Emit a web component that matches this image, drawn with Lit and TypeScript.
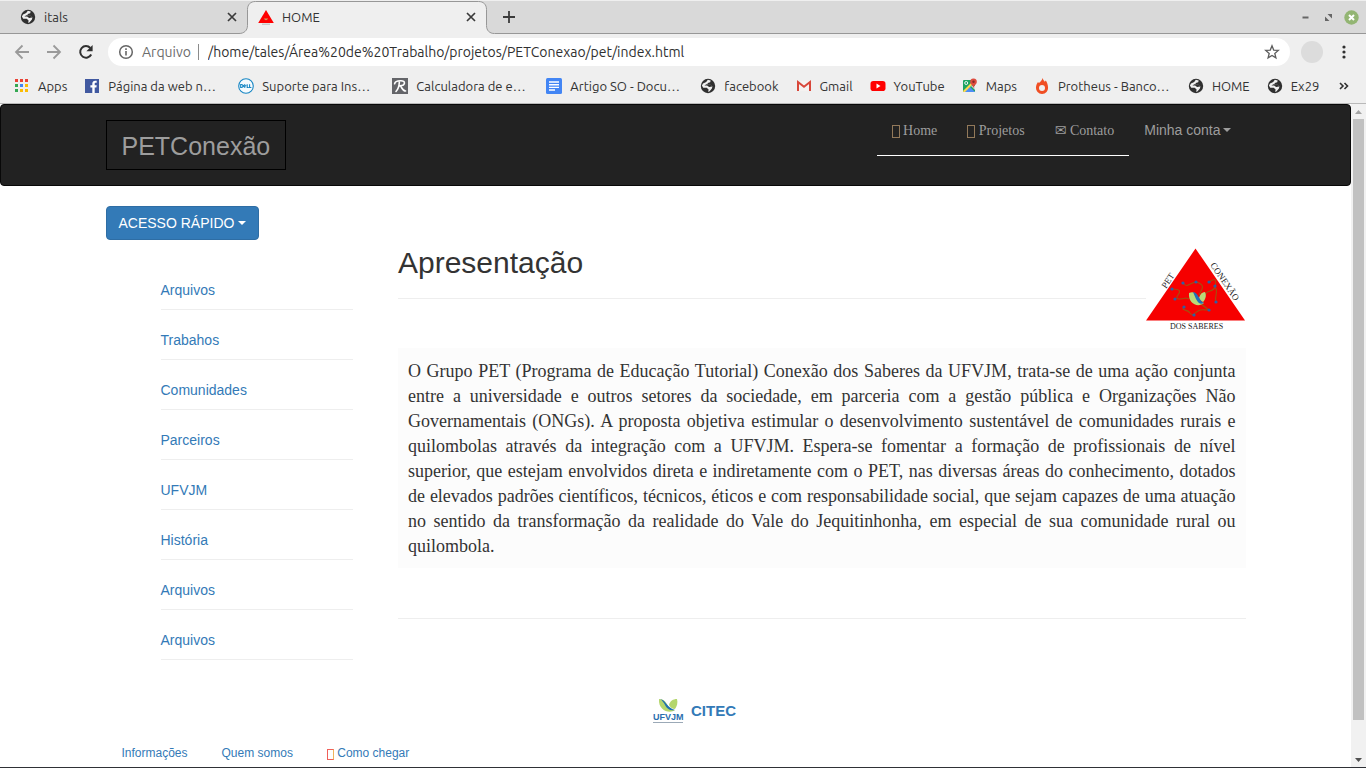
import { LitElement, html, css, svg } from "lit";
import { customElement } from "lit/decorators.js";

const globe = html`<svg class="ico" viewBox="0 0 16 16" aria-hidden="true">
  <circle cx="8" cy="8" r="7.2" fill="#303030" />
  <path d="M3 5.6 6.2 4l1.6-2.2 2.9.6-.5 1.8-2.4.8-.4 1.5 3.3.3 1.7 1.8-.5 2-2.3 2.6-1.4.8.4-2.6-1.9-1.6H3.2L1.9 7.6z" fill="#efefef" />
  <path d="M6.4 6.2 11 6.6l1.3 1.8-3.2.6-2-1.4H4.4z" fill="#303030" />
</svg>`;

const apps = html`<svg class="ico" viewBox="0 0 16 16" aria-hidden="true">
  ${["#e94235", "#e94235", "#e94235", "#34a853", "#4285f4", "#fbbc05", "#34a853", "#fbbc05", "#fbbc05"].map(
    (c, i) => svg`<rect x=${1 + (i % 3) * 5} y=${1 + Math.floor(i / 3) * 5} width="3" height="3" fill=${c} />`
  )}
</svg>`;

const facebook = html`<svg class="ico" viewBox="0 0 16 16" aria-hidden="true">
  <rect x="1" y="1" width="14" height="14" fill="#4159a0" />
  <path d="M8.3 15V9.4H6.4V7.2h1.9V5.7c0-2 1.1-3 2.9-3h1.5v2.1h-1c-.8 0-1 .4-1 1v1.4h2l-.3 2.2h-1.7V15z" fill="#fff" />
</svg>`;

const dell = html`<svg class="ico" viewBox="0 0 16 16" aria-hidden="true">
  <circle cx="8" cy="8" r="7.3" fill="#f6fbfe" stroke="#1686c4" stroke-width="1.1" />
  <path d="M2.7 6.5v3h.8c1.9 0 1.9-3 0-3zM5.2 8l2-1.5M5.2 8l2 1.6M6.2 8.9l2-1.5M9.2 6.3v3.2h1.6M11.6 6.3v3.2h1.8" fill="none" stroke="#1686c4" stroke-width="1.1" />
</svg>`;

const calc = html`<svg class="ico" viewBox="0 0 16 16" aria-hidden="true">
  <rect width="16" height="16" fill="#646569" />
  <path d="M2.6 5.8C3 3.5 6 2.6 9 2.7c4.8.1 4.7 4.7-1 5.2M7.4 3.5C7.2 8 6 11.5 4 13.5M8 8c1.6 0 2 5 5.6 5" fill="none" stroke="#fff" stroke-width="1.6" stroke-linecap="round" />
</svg>`;

const docs = html`<svg class="ico" viewBox="0 0 16 16" aria-hidden="true">
  <rect width="16" height="16" rx="1.5" fill="#4285f4" />
  <path d="M3 4h10M3 6.7h10M3 9.4h10M3 12h6" stroke="#fff" stroke-width="1.4" />
</svg>`;

const gmail = html`<svg class="ico" viewBox="0 0 16 16" aria-hidden="true">
  <path d="M2 3h12v10H2z" fill="#f4f2f1" />
  <path d="M2 13V4l6 4.700L14 4V13" fill="none" stroke="#d8473a" stroke-width="2" />
</svg>`;

const youtube = html`<svg class="ico" viewBox="0 0 16 16" aria-hidden="true">
  <rect x="0.5" y="3" width="15" height="10" rx="2.8" fill="#f00" />
  <path d="m6.5 5.600 4 2.400-4 2.400z" fill="#fff" />
</svg>`;

const maps = html`<svg class="ico" viewBox="0 0 16 16" aria-hidden="true">
  <rect x="1" y="2" width="12" height="12" rx="1" fill="#1da362" />
  <path d="m7.5 8.5 5.5 5.5H2z" fill="#4d8ef5" />
  <path d="m1 13 8-8 1.5 1.5L3 14H2q-1 0-1-1z" fill="#ffd94a" />
  <path d="m8.5 7.5 4.5 4.5V8z" fill="#d9d9d9" />
  <circle cx="4.2" cy="5" r="1.5" fill="none" stroke="#fff" stroke-width="0.9" />
  <path d="M11.5 0.500a3.300 3.300 0 0 1 3.300 3.500c0 2.400-2.500 2.800-3.300 6-.8-3.200-3.300-3.600-3.300-6a3.300 3.300 0 0 1 3.300-3.500z" fill="#dd4b3e" />
  <circle cx="11.5" cy="3.7" r="1.2" fill="#822b26" />
</svg>`;

const flame = html`<svg class="ico" viewBox="0 0 16 16" aria-hidden="true">
  <path d="M8.8 0c.3 2.200 1.300 2.800 2 3.800l1-1.200c1.300 2 2.200 4.300 2.200 6.600A6 6 0 0 1 8 16a6 6 0 0 1-6-6.500c0-2.200.9-3.900 2-5.500l.9 1C6.800 3.800 7.900 2.200 8.800 0z" fill="#f04e23" />
  <circle cx="8" cy="10" r="3" fill="#efefef" />
</svg>`;

const minas = html`<svg class="ico" viewBox="0 0 16 16" aria-hidden="true">
  <path d="M8 1 15.800 14H.2z" fill="#f00" />
  <path d="M5.800 9.500q2.200 3.500 4.400 0" fill="#cf9b62" />
  <path d="M4 15.200h8" stroke="#aaa" stroke-width="0.8" />
</svg>`;

const bookmarks = [
  { icon: apps, text: "Apps" },
  { icon: facebook, text: "Página da web n…", full: true },
  { icon: dell, text: "Suporte para Ins…", full: true },
  { icon: calc, text: "Calculadora de e…", full: true },
  { icon: docs, text: "Artigo SO - Docu…", full: true },
  { icon: globe, text: "facebook" },
  { icon: gmail, text: "Gmail" },
  { icon: youtube, text: "YouTube" },
  { icon: maps, text: "Maps" },
  { icon: flame, text: "Protheus - Banco…", full: true },
  { icon: globe, text: "HOME" },
  { icon: globe, text: "Ex29" },
];

const cross = html`<svg width="10" height="10" viewBox="0 0 10 10" aria-hidden="true">
  <path d="m1 1 8 8M9 1 1 9" stroke="#3a3a3a" stroke-width="1.7" />
</svg>`;

@customElement("browser-chrome")
export class BrowserChrome extends LitElement {
  static styles = css`
    :host {
      display: block;
      background: #efefef;
      border-bottom: 1px solid #b9b9b9;
      font: 13px/20px Ubuntu, "Noto Sans", sans-serif;
      color: #333;
    }
    button {
      display: grid;
      place-items: center;
      padding: 0;
      border: 0;
      background: none;
      color: inherit;
      font: inherit;
    }
    .ico {
      width: 16px;
      height: 16px;
      flex: none;
      display: block;
    }
    .strip {
      display: flex;
      align-items: center;
      height: 34px;
      box-sizing: border-box;
      background: #d9d9d9;
      border-top: 1px solid #efefef;
      border-bottom: 1px solid #979797;
    }
    .tab {
      position: relative;
      display: flex;
      align-items: center;
      gap: 8px;
      width: 240px;
      height: 32px;
      box-sizing: border-box;
      padding: 0 11px;
    }
    .tab.first {
      width: 247px;
      padding-left: 20px;
      padding-right: 10px;
    }
    .tab .title {
      flex: 1;
      position: relative;
    }
    .tab .ico,
    .tab button {
      position: relative;
    }
    .shape {
      position: absolute;
      left: -8px;
      top: 0;
    }
    .new {
      width: 44px;
      height: 32px;
    }
    .window {
      display: flex;
      align-items: center;
      gap: 8px;
      margin-left: auto;
      padding-right: 7px;
    }
    .window button {
      width: 15px;
      height: 15px;
    }
    .toolbar {
      display: flex;
      align-items: center;
      height: 36px;
      padding: 0 12px 0 6px;
    }
    .toolbar .nav {
      width: 32px;
      height: 28px;
    }
    .omni {
      display: flex;
      align-items: center;
      flex: 1;
      height: 28px;
      margin: 0 11px 0 6px;
      padding: 0 10px;
      border-radius: 14px;
      background: #fff;
      font-size: 14px;
    }
    .scheme {
      color: #6c6c6c;
      margin: 0 7px 0 8px;
      padding-right: 7px;
      border-right: 1px solid #8b8b8b;
      line-height: 16px;
    }
    .omni input {
      flex: 1;
      min-width: 0;
      border: 0;
      padding: 0 2px;
      background: none;
      font: inherit;
      color: #303030;
      outline: 0;
    }
    .avatar {
      width: 22px;
      height: 22px;
      border-radius: 50%;
      background: #dcdcdc;
      margin-right: 11px;
    }
    .marks {
      display: flex;
      align-items: center;
      gap: 17px;
      height: 31px;
      padding: 0 17px 2px 14px;
    }
    .mark {
      display: flex;
      align-items: center;
      gap: 8px;
      color: inherit;
      text-decoration: none;
      white-space: nowrap;
    }
    .mark.full {
      width: 137px;
    }
    .more {
      margin-left: auto;
    }
  `;

  render() {
    return html`
      <div class="strip">
        <div class="tab first">
          ${globe}<span class="title">itals</span>
          <button aria-label="Fechar itals">${cross}</button>
        </div>
        <div class="tab">
          <svg class="shape" width="256" height="33" viewBox="0 0 256 33" aria-hidden="true">
            <path d="M0 33v-.5C5 32.500 8.500 29.500 8.500 24.500V8.500C8.500 3.500 11.500.5 16.500.5h223c5 0 8 3 8 8v16c0 5 3 8 8 8h.5v.5z" fill="#efefef" />
            <path d="M0 32.500C5 32.500 8.500 29.500 8.500 24.500V8.500C8.500 3.500 11.500.5 16.500.5h223c5 0 8 3 8 8v16c0 5 3 8 8 8" fill="none" stroke="#979797" />
          </svg>
          ${minas}<span class="title">HOME</span>
          <button aria-label="Fechar HOME">${cross}</button>
        </div>
        <button class="new" aria-label="Nova guia">
          <svg width="12" height="12" viewBox="0 0 12 12"><path d="M6 0v12M0 6h12" stroke="#3a3a3a" stroke-width="1.8" /></svg>
        </button>
        <div class="window">
          <button aria-label="Minimizar">
            <svg width="15" height="15"><path d="M4.500 7.500h6" stroke="#666" stroke-width="2" /></svg>
          </button>
          <button aria-label="Restaurar">
            <svg width="15" height="15"><path d="M6.500 4H11v4.500zM4 6.500V11h4.500z" fill="#666" /></svg>
          </button>
          <button aria-label="Fechar janela">
            <svg width="15" height="15">
              <circle cx="7.5" cy="7.5" r="7.2" fill="#93b573" />
              <path d="m5 5 5 5M10 5l-5 5" stroke="#fff" stroke-width="2" />
            </svg>
          </button>
        </div>
      </div>
      <div class="toolbar">
        <button class="nav" aria-label="Voltar">
          <svg width="16" height="16" viewBox="0 0 16 16"><path d="M15 8H2M8.500 1.500 2 8l6.500 6.500" fill="none" stroke="#9a9a9a" stroke-width="1.8" /></svg>
        </button>
        <button class="nav" aria-label="Avançar">
          <svg width="16" height="16" viewBox="0 0 16 16"><path d="M1 8h13M7.500 1.500 14 8l-6.500 6.500" fill="none" stroke="#9a9a9a" stroke-width="1.8" /></svg>
        </button>
        <button class="nav" aria-label="Recarregar">
          <svg width="16" height="16" viewBox="0 0 16 16">
            <path d="M13.200 10.500A5.800 5.800 0 1 1 12.300 4" fill="none" stroke="#303030" stroke-width="2" />
            <path d="M14.600 1v6.200H8.400z" fill="#303030" />
          </svg>
        </button>
        <div class="omni">
          <svg class="ico" viewBox="0 0 16 16" aria-hidden="true">
            <circle cx="8" cy="8" r="6.3" fill="none" stroke="#666" stroke-width="1.5" />
            <path d="M8 7v4.500M8 4.300v1.600" stroke="#666" stroke-width="1.6" />
          </svg>
          <label class="scheme" for="url">Arquivo</label>
          <input id="url" value="/home/tales/Área%20de%20Trabalho/projetos/PETConexao/pet/index.html" />
          <svg class="ico" viewBox="0 0 16 16" aria-hidden="true">
            <path d="m8 1.800 1.700 4.300 4.600.3-3.500 3 1.100 4.500L8 11.400l-3.900 2.500 1.100-4.500-3.500-3 4.600-.3z" fill="none" stroke="#5c5c5c" stroke-width="1.3" />
          </svg>
        </div>
        <div class="avatar"></div>
        <button aria-label="Menu">
          <svg width="20" height="16"><g fill="#303030"><circle cx="10" cy="3" r="1.6" /><circle cx="10" cy="8" r="1.6" /><circle cx="10" cy="13" r="1.6" /></g></svg>
        </button>
      </div>
      <div class="marks">
        ${bookmarks.map((b) => html`<a class="mark ${b.full ? "full" : ""}" href="#">${b.icon}<span>${b.text}</span></a>`)}
        <button class="more" aria-label="Mais favoritos">
          <svg width="10" height="8" viewBox="0 0 10 8"><path d="m1 1 3 3-3 3M5.500 1l3 3-3 3" fill="none" stroke="#303030" stroke-width="1.6" /></svg>
        </button>
      </div>
    `;
  }
}

const petLogo = html`<svg class="pet" viewBox="0 2 100 100" role="img" aria-label="PET Conexão dos Saberes">
  <rect y="2" width="100" height="100" fill="#fff" />
  <path d="M49.500 10.500 99 82.500H0z" fill="#f60000" />
  <g fill="none" stroke="#a0520f" stroke-width="1.1">
    <path d="M37 45c4 6 8-1 13-1 8 2 8 5 3 13" />
    <path d="M26 51c8 0 9 2 6 6s0 5 8 3l3 1" />
    <path d="M63 44c6-4 8-3 6 5-2 6-8 2-10 8M69 49c4 4-1 9 1 15" />
    <path d="M38 69c-4 4 4 2 6 6 3 4 3 1 8-2 3-2 5-1 11-1l-8-6" />
  </g>
  <g fill="#2c5fa8">
    ${[[37, 45], [50, 44], [26, 51], [29, 61], [63, 44], [69, 48], [70, 64], [38, 69], [48, 77], [63, 72]].map(
      ([x, y]) => svg`<circle cx=${x} cy=${y} r="1.6" />`
    )}
  </g>
  <path d="M43 55c4-2 7 0 9 4s3 5 6 6c-6 5-16 1-15-10zM53 60c1-4 3-6 6-6 2 4 0 8-2 10-2-1-3-2-4-4z" fill="#b9d978" />
  <path d="M47 54c5 0 6 9 11 11-5 2-6-1-8-4z" fill="#1f6fb8" />
  <g font-family="Liberation Serif, serif" fill="#222">
    <text x="0" y="0" font-size="9" transform="translate(20 51) rotate(-56)">PET</text>
    <text x="0" y="0" font-size="9" transform="translate(64 27) rotate(56)">CONEXÃO</text>
    <text x="24" y="91" font-size="8">DOS SABERES</text>
  </g>
</svg>`;

const ufvjmLogo = html`<svg class="ufvjm" viewBox="0 0 32 26" role="img" aria-label="UFVJM">
  <path d="M6 1c5 0 7 3 9 7s4 4 7 4C17 16 5 13 6 1zM16 7c1-4 4-6 8-6 1 4 0 7-2 10-3 0-5-2-6-4z" fill="#b4d66c" />
  <path d="M7 1c6 1 7 9 15 11-5 1-8-1-10-5-1-2-3-5-5-6z" fill="#1f6fb0" />
  <text x="0" y="22" font-family="Liberation Sans, sans-serif" font-weight="700" font-size="9" fill="#2a6eae">UFVJM</text>
  <path d="M0 24.500h30" stroke="#8293a5" stroke-width="0.8" />
</svg>`;

const sideLinks = ["Arquivos", "Trabahos", "Comunidades", "Parceiros", "UFVJM", "História", "Arquivos", "Arquivos"];

@customElement("pet-page")
export class PetPage extends LitElement {
  static styles = css`
    :host {
      display: block;
      background: #fff;
      color: #333;
      font: 14px/20px "Liberation Sans", Arial, sans-serif;
    }
    a {
      color: #337ab7;
      text-decoration: none;
    }
    button {
      font: inherit;
    }
    .container {
      width: min(1140px, 100% - 30px);
      margin: 0 auto;
    }
    .navbar {
      border: 1px solid #080808;
      border-radius: 4px;
      background: #222;
      margin-bottom: 20px;
    }
    .navbar .container {
      display: flex;
      justify-content: space-between;
      padding: 15px 0;
      align-items: flex-start;
    }
    .brand {
      padding: 15px 15px 13px;
      border: 1px solid #000;
      font-size: 25px;
      color: #9d9d9d;
    }
    .menu {
      display: flex;
      align-items: flex-start;
    }
    .pages {
      display: flex;
      border-bottom: 1px solid #fff;
      font-family: "Liberation Serif", "DejaVu Sans", serif;
      padding-bottom: 14px;
    }
    .pages a,
    .account {
      padding: 0 15px;
      color: #9d9d9d;
    }
    .pages a {
      padding-top: 1px;
    }
    .account {
      display: flex;
      align-items: center;
      gap: 2px;
      border: 0;
      background: none;
    }
    .caret {
      border: 4px solid transparent;
      border-top-color: currentColor;
      border-bottom: 0;
    }
    .missing {
      display: inline-block;
      box-sizing: border-box;
      width: 8px;
      height: 13px;
      border: 1px solid #92795a;
      vertical-align: -3px;
    }
    .missing.small {
      width: 7px;
      height: 11px;
      border-color: #f0605a #f0b35c #f0605a #f0605a;
    }
    .quick {
      display: flex;
      align-items: center;
      gap: 4px;
      padding: 6px 12px;
      border: 1px solid #2e6da4;
      border-radius: 4px;
      background: #337ab7;
      color: #fff;
    }
    .columns {
      display: grid;
      grid-template-columns: 1fr 3fr;
      margin: 0 -15px;
    }
    .side {
      list-style: none;
      margin: 0;
      padding: 40px 30px 0 70px;
    }
    .side li {
      padding-bottom: 9px;
      margin-bottom: 20px;
      border-bottom: 1px solid #eee;
    }
    main {
      padding: 0 15px;
    }
    .heading {
      display: flex;
      align-items: flex-start;
      height: 108px;
    }
    h1 {
      flex: 1;
      margin: 0;
      padding: 6px 0 18px;
      border-bottom: 1px solid #eee;
      font-size: 30px;
      line-height: 34px;
      font-weight: 500;
    }
    .pet {
      width: 100px;
      height: 100px;
    }
    .about {
      margin: 0 0 50px;
      padding: 11px 10px 9px;
      background: #fcfcfc;
      font: 18px/25px "Liberation Serif", "Times New Roman", serif;
      text-align: justify;
    }
    .rule {
      margin: 0;
      border: 0;
      border-top: 1px solid #eee;
    }
    .partner {
      display: flex;
      align-items: center;
      justify-content: center;
      gap: 6px;
      padding-top: 18px;
      padding-left: 38px;
      font-size: 15px;
      font-weight: 700;
    }
    .ufvjm {
      width: 32px;
      height: 26px;
    }
    .foot {
      display: flex;
      gap: 34px;
      padding: 19px 16px;
      font-size: 12px;
    }
  `;

  render() {
    return html`
      <nav class="navbar">
        <div class="container">
          <a class="brand" href="#">PETConexão</a>
          <div class="menu">
            <div class="pages">
              <a href="#"><i class="missing"></i> Home</a>
              <a href="#"><i class="missing"></i> Projetos</a>
              <a href="#">✉ Contato</a>
            </div>
            <button class="account">Minha conta<i class="caret"></i></button>
          </div>
        </div>
      </nav>
      <div class="container">
        <button class="quick">ACESSO RÁPIDO<i class="caret"></i></button>
        <div class="columns">
          <ul class="side">
            ${sideLinks.map((t) => html`<li><a href="#">${t}</a></li>`)}
          </ul>
          <main>
            <div class="heading">
              <h1>Apresentação</h1>
              ${petLogo}
            </div>
            <p class="about">
              O Grupo PET (Programa de Educação Tutorial) Conexão dos Saberes da UFVJM, trata-se de uma ação conjunta
              entre a universidade e outros setores da sociedade, em parceria com a gestão pública e Organizações Não
              Governamentais (ONGs). A proposta objetiva estimular o desenvolvimento sustentável de comunidades rurais e
              quilombolas através da integração com a UFVJM. Espera-se fomentar a formação de profissionais de nível
              superior, que estejam envolvidos direta e indiretamente com o PET, nas diversas áreas do conhecimento,
              dotados de elevados padrões científicos, técnicos, éticos e com responsabilidade social, que sejam capazes
              de uma atuação no sentido da transformação da realidade do Vale do Jequitinhonha, em especial de sua
              comunidade rural ou quilombola.
            </p>
            <hr class="rule" />
          </main>
        </div>
        <footer>
          <div class="partner">${ufvjmLogo}<a href="#">CITEC</a></div>
          <div class="foot">
            <a href="#">Informações</a>
            <a href="#">Quem somos</a>
            <a href="#"><i class="missing small"></i> Como chegar</a>
          </div>
        </footer>
      </div>
    `;
  }
}

@customElement("app-root")
export class AppRoot extends LitElement {
  static styles = css`
    :host {
      display: flex;
      flex-direction: column;
      height: 100vh;
      box-sizing: border-box;
      border-bottom: 1px solid #2f3136;
      overflow: hidden;
    }
    browser-chrome {
      flex: none;
    }
    .view {
      display: flex;
      flex: 1;
      min-height: 0;
    }
    pet-page {
      flex: 1;
      overflow: hidden;
    }
    .bar {
      display: flex;
      flex-direction: column;
      align-items: center;
      width: 15px;
      background: #f1f1f1;
    }
    .bar svg {
      flex: none;
    }
    .track {
      flex: 1;
      align-self: stretch;
      padding: 0 2px;
    }
    .thumb {
      height: 95%;
      background: #c1c1c1;
    }
  `;

  render() {
    return html`
      <browser-chrome></browser-chrome>
      <div class="view">
        <pet-page></pet-page>
        <div class="bar">
          <svg width="15" height="15"><path d="M4 10h7L7.500 6z" fill="#a3a3a3" /></svg>
          <div class="track"><div class="thumb"></div></div>
          <svg width="15" height="15"><path d="M4 6h7l-3.500 4z" fill="#505050" /></svg>
        </div>
      </div>
    `;
  }
}
